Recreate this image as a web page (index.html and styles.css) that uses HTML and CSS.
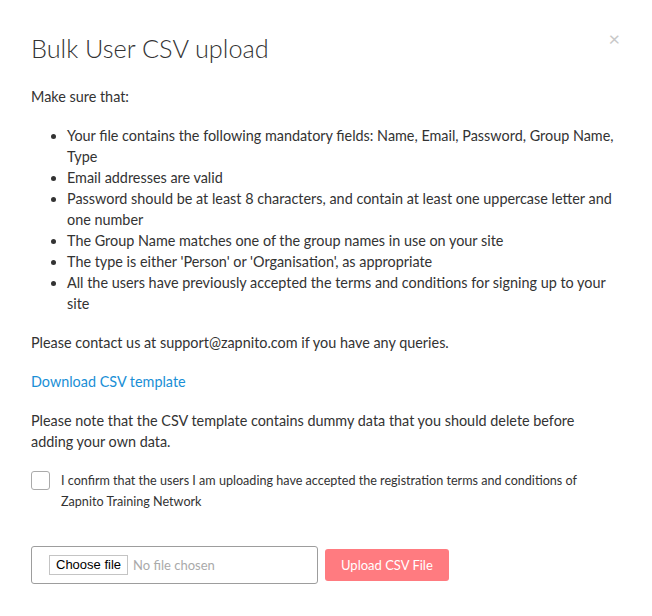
FILE: index.html
```html
<!doctype html>
<html lang="en">
  <head>
    <title>Bulk User CSV upload</title>
    <meta charset="UTF-8">
    <link rel="stylesheet" href="styles.css">
  </head>
  <body>
    <div class="modal">
      <div class="modalHeader">
        <h2 class="modalTitle">Bulk User CSV upload</h2>
        <span class="close">&times;</span>
      </div>
      <div class="modalBody">
        <p>Make sure that:</p>
        <ul class="rules">
          <li>Your file contains the following mandatory fields: Name, Email, Password, Group Name, Type</li>
          <li>Email addresses are valid</li>
          <li>Password should be at least 8 characters, and contain at least one uppercase letter and one number</li>
          <li>The Group Name matches one of the group names in use on your site</li>
          <li>The type is either 'Person' or 'Organisation', as appropriate</li>
          <li>All the users have previously accepted the terms and conditions for signing up to your site</li>
        </ul>
        <p>Please contact us at support@zapnito.com if you have any queries.</p>
        <p><a class="link" href="#">Download CSV template</a></p>
        <p>Please note that the CSV template contains dummy data that you should delete before adding your own data.</p>

        <label class="confirm">
          <span class="checkbox"></span>
          <span class="confirmText">I confirm that the users I am uploading have accepted the registration terms and conditions of Zapnito Training Network</span>
        </label>

        <div class="uploadRow">
          <div class="fileBox">
            <span class="fileButton">Choose file</span>
            <span class="fileName">No file chosen</span>
          </div>
          <button class="uploadButton" type="button">Upload CSV File</button>
        </div>
      </div>
    </div>
  </body>
</html>
```

FILE: styles.css
```css
body {
  margin: 0;
  background-color: #fff;
  font-family: Lato, "Open Sans", sans-serif;
  color: #333;
}

.modal {
  padding: 30px 31px;
}

.modalHeader {
  display: flex;
  justify-content: space-between;
  align-items: flex-start;
}

.modalTitle {
  margin: 1px 0 0 0;
  font-size: 25.3px;
  font-weight: 300;
  line-height: 34px;
  color: #333;
}

.close {
  margin: 0 1px 0 0;
  font-size: 20px;
  line-height: 16px;
  color: #c8c8c8;
}

.modalBody {
  padding: 21px 4px 0 0;
  font-size: 14.4px;
  line-height: 21px;
}

.modalBody p {
  margin: 0 0 18px 0;
}

.rules {
  margin: 0 0 18px 0;
  padding-left: 36px;
}

.link {
  color: #1a8fd6;
  text-decoration: none;
}

.confirm {
  display: flex;
  align-items: flex-start;
  gap: 11px;
  margin-top: 16px;
  font-size: 12.6px;
  line-height: 21px;
}

.checkbox {
  flex: none;
  width: 17px;
  height: 17px;
  margin-top: 1px;
  border: 1px solid #aaa;
  border-radius: 3px;
  background-color: #fff;
}

.confirmText {
  padding-right: 26px;
}

.uploadRow {
  display: flex;
  align-items: center;
  gap: 7px;
  margin-top: 34px;
}

.fileBox {
  display: flex;
  align-items: center;
  gap: 5px;
  width: 268px;
  height: 36px;
  padding-left: 17px;
  border: 1px solid #9d9d9d;
  border-radius: 3px;
}

.fileButton {
  padding: 1px 6px;
  border: 1px solid #c4c4c4;
  background-color: #fff;
  font-family: "Liberation Sans", Arial, sans-serif;
  font-size: 13px;
  line-height: 16px;
  color: #000;
}

.fileName {
  font-size: 13px;
  color: #aaa;
}

.uploadButton {
  padding: 0 16px;
  height: 32px;
  border: none;
  border-radius: 3px;
  background-color: #ff7b80;
  color: #fff;
  font-family: Lato, sans-serif;
  font-size: 13px;
}
```
